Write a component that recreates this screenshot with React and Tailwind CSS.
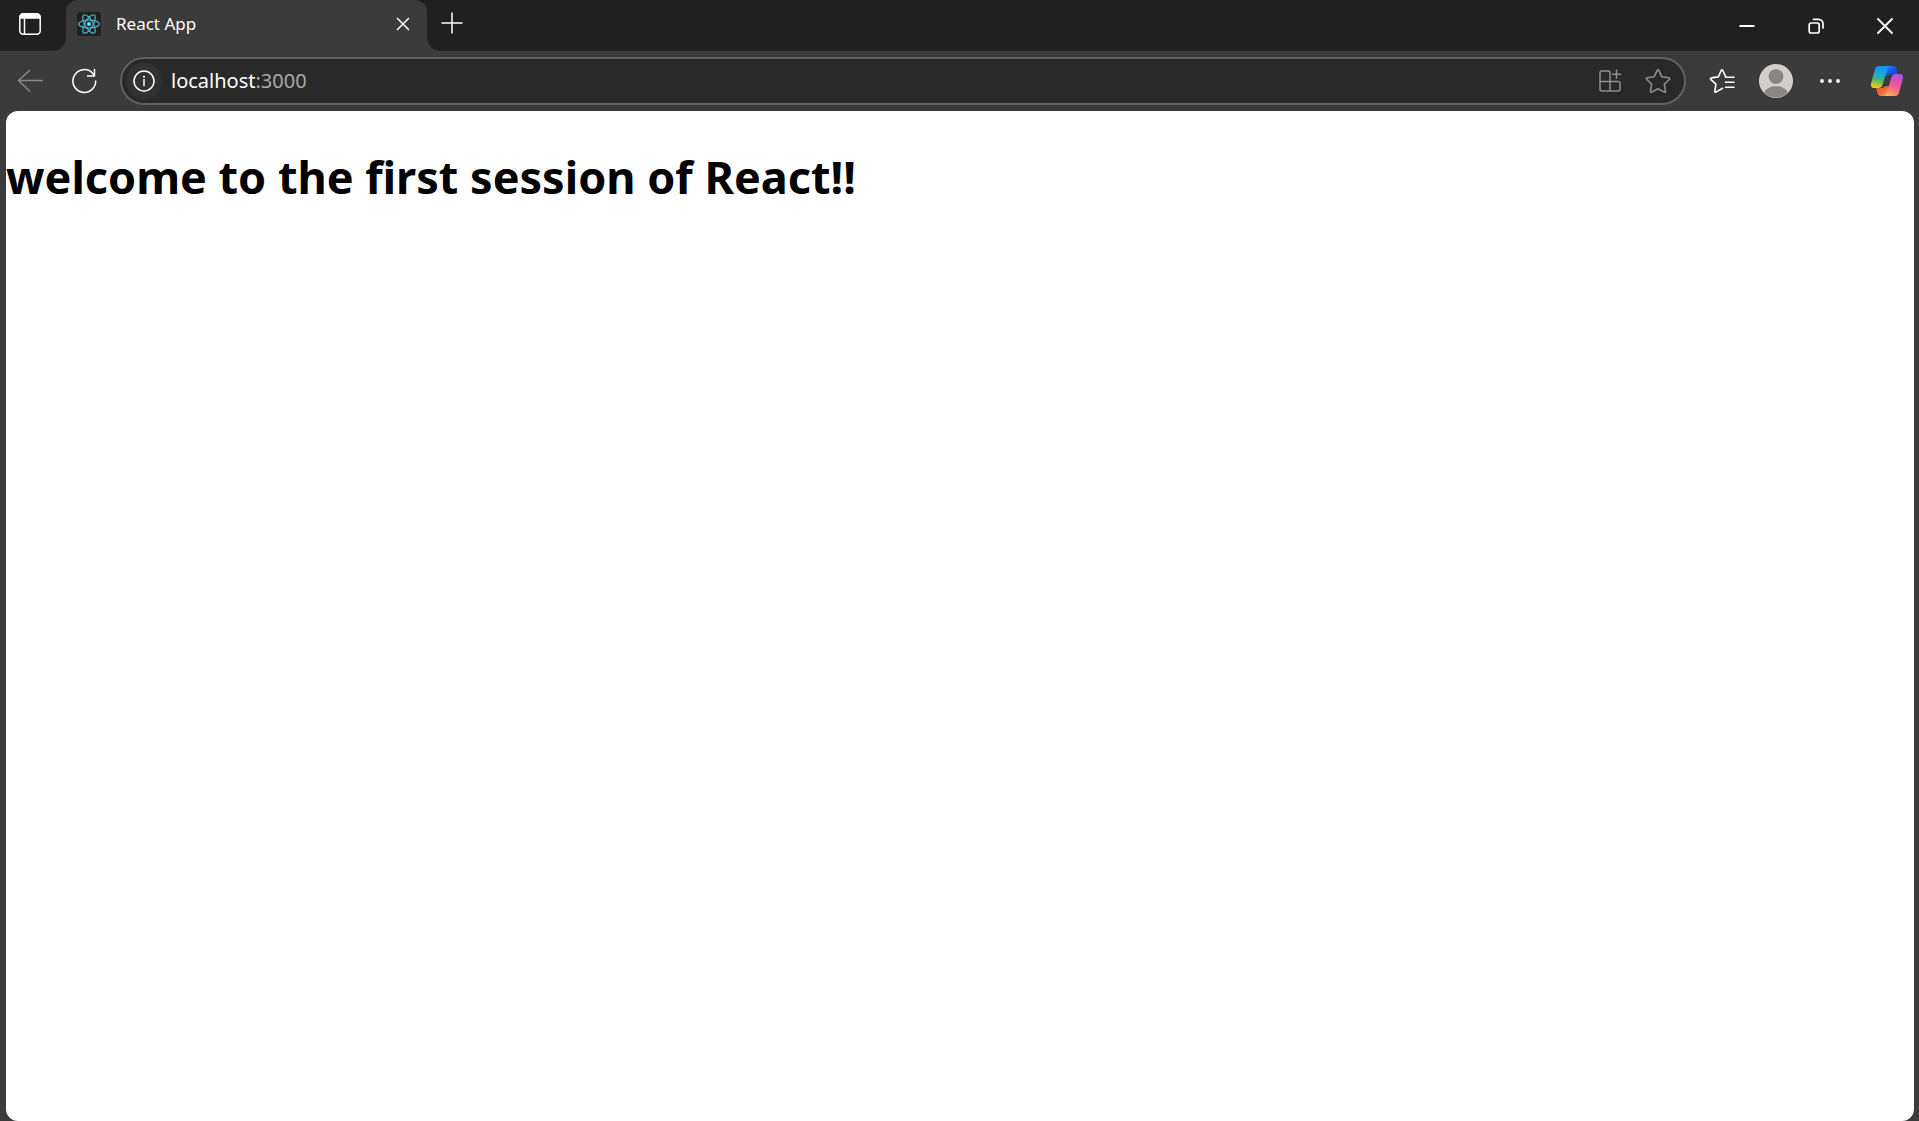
import React from "react";

const stroke = {
  fill: "none",
  stroke: "currentColor",
  strokeLinecap: "round",
  strokeLinejoin: "round",
};

const TabActionsIcon = () => (
  <svg width="24" height="24" viewBox="0 0 24 24" {...stroke} strokeWidth="1.5" aria-hidden="true">
    <rect x="1.8" y="1.8" width="20.4" height="20.4" rx="3.5" />
    <path d="M2 5.5A3.5 3.5 0 0 1 5.5 2h13A3.5 3.5 0 0 1 22 5.500V6H2z" fill="currentColor" />
    <path d="M6.500 6v16" />
  </svg>
);

const ReactIcon = () => (
  <svg width="24" height="24" viewBox="0 0 24 24" aria-hidden="true">
    <rect width="24" height="24" rx="2.500" fill="#222222" />
    <g fill="none" stroke="#53bbd6" strokeWidth="1.100">
      <ellipse cx="12" cy="12" rx="10.400" ry="4" />
      <ellipse cx="12" cy="12" rx="10.400" ry="4" transform="rotate(60 12 12)" />
      <ellipse cx="12" cy="12" rx="10.400" ry="4" transform="rotate(120 12 12)" />
    </g>
    <circle cx="12" cy="12" r="2" fill="#61dafb" />
  </svg>
);

const CloseTabIcon = () => (
  <svg width="14" height="14" viewBox="0 0 14 14" {...stroke} strokeWidth="1.500" aria-hidden="true">
    <path d="M1.500 1.500l11 11M12.500 1.500l-11 11" />
  </svg>
);

const PlusIcon = () => (
  <svg width="22" height="22" viewBox="0 0 22 22" {...stroke} strokeWidth="1.500" aria-hidden="true">
    <path d="M11 1v20M1 11h20" />
  </svg>
);

const MinimizeIcon = () => (
  <svg width="16" height="16" viewBox="0 0 16 16" {...stroke} strokeLinecap="butt" strokeWidth="2" aria-hidden="true">
    <path d="M.5 8h15" />
  </svg>
);

const RestoreIcon = () => (
  <svg width="16" height="16" viewBox="0 0 16 16" {...stroke} strokeWidth="1.700" aria-hidden="true">
    <rect x="1.200" y="5" width="10" height="10" rx="2" />
    <path d="M5.500 1.300H10.500A4.500 4.500 0 0 1 15 5.800V10" />
  </svg>
);

const CloseWindowIcon = () => (
  <svg width="16" height="16" viewBox="0 0 16 16" {...stroke} strokeWidth="1.800" aria-hidden="true">
    <path d="M1 1l14 14M15 1L1 15" />
  </svg>
);

const BackIcon = () => (
  <svg width="26" height="24" viewBox="0 0 26 24" {...stroke} strokeWidth="1.400" aria-hidden="true">
    <path d="M25 11.500H1.500M12.500 1.500l-11 10 11 10.500" />
  </svg>
);

const ReloadIcon = () => (
  <svg width="26" height="26" viewBox="0 0 26 26" {...stroke} strokeWidth="1.500" aria-hidden="true">
    <path d="M24.700 13A11.400 11.400 0 1 1 21.700 5.300L23.500 7.800M23.500 1.500V8H16.500" />
  </svg>
);

const InfoIcon = () => (
  <svg width="22" height="22" viewBox="0 0 22 22" {...stroke} strokeWidth="1.500" aria-hidden="true">
    <circle cx="11" cy="11" r="10" />
    <path d="M11 9.500v6" />
    <circle cx="11" cy="6.800" r="1" fill="currentColor" stroke="none" />
  </svg>
);

const AppsIcon = () => (
  <svg width="24" height="24" viewBox="0 0 24 24" {...stroke} strokeWidth="1.500" aria-hidden="true">
    <path d="M12 12.500V4a2 2 0 0 0-2-2H4a2 2 0 0 0-2 2v16a2 2 0 0 0 2 2h16a2 2 0 0 0 2-2v-5.500a2 2 0 0 0-2-2H2M12 12.500V22" />
    <path d="M18.500 1.200v8M14.500 5.200h8" />
  </svg>
);

const StarIcon = () => (
  <svg width="26" height="26" viewBox="0 0 26 26" {...stroke} strokeWidth="1.600" aria-hidden="true">
    <path d="M12.200 2.300Q13 1 13.800 2.300L16.900 8.800L24 9.800Q25.300 10.200 24.400 11.200L19.300 16.200L20.500 23.300Q20.500 24.700 19.300 24.100L13 20.800L6.700 24.100Q5.500 24.700 5.500 23.300L6.700 16.200L1.600 11.200Q.7 10.200 2 9.800L9.100 8.800Z" />
  </svg>
);

const FavoritesIcon = () => (
  <svg width="26" height="26" viewBox="0 0 26 26" {...stroke} strokeWidth="1.600" aria-hidden="true">
    <path d="M13.500 20.300L6.900 24.100Q5.600 24.600 5.800 23.200L6.900 16.200L1.800 11.400Q.9 10.300 2.200 9.900L9.300 8.900L12.300 2.300Q13 1.100 13.700 2.300L16.800 8.900" />
    <path d="M16.500 9.200H25M16.500 14.200H25M16.500 19.200H25" />
  </svg>
);

const AvatarIcon = () => (
  <svg width="34" height="34" viewBox="0 0 34 34" aria-hidden="true">
    <defs>
      <clipPath id="avatarClip">
        <circle cx="17" cy="17" r="16.500" />
      </clipPath>
    </defs>
    <circle cx="17" cy="17" r="17" fill="#d2d0ce" />
    <g clipPath="url(#avatarClip)" fill="#8a8684">
      <circle cx="17" cy="12.600" r="7.400" />
      <ellipse cx="17" cy="32.500" rx="12.800" ry="10.500" />
    </g>
  </svg>
);

const DotsIcon = () => (
  <svg width="22" height="6" viewBox="0 0 22 6" fill="currentColor" aria-hidden="true">
    <circle cx="3" cy="3" r="1.900" />
    <circle cx="11" cy="3" r="1.900" />
    <circle cx="19" cy="3" r="1.900" />
  </svg>
);

const CopilotIcon = () => (
  <svg width="34" height="32" viewBox="0 0 34 32" aria-hidden="true">
    <defs>
      <linearGradient id="copLeft" x1=".55" y1="0" x2=".35" y2="1">
        <stop offset="0" stopColor="#1a8ff0" />
        <stop offset=".35" stopColor="#16a5dc" />
        <stop offset=".65" stopColor="#4fb573" />
        <stop offset="1" stopColor="#f8cf0a" />
      </linearGradient>
      <linearGradient id="copTop" x1="0" y1="0" x2="1" y2="1">
        <stop offset="0" stopColor="#1b8df5" />
        <stop offset=".6" stopColor="#1551d8" />
        <stop offset="1" stopColor="#2a3fc4" />
      </linearGradient>
      <linearGradient id="copRight" x1=".75" y1="0" x2=".35" y2="1">
        <stop offset="0" stopColor="#a750ee" />
        <stop offset=".45" stopColor="#e9549b" />
        <stop offset=".75" stopColor="#fb7a76" />
        <stop offset="1" stopColor="#ffb155" />
      </linearGradient>
      <linearGradient id="copBottom" x1="0" y1="0" x2="1" y2="1">
        <stop offset="0" stopColor="#e8452f" />
        <stop offset="1" stopColor="#ff9145" />
      </linearGradient>
    </defs>
    <path d="M16 1h7c2 0 3 1 3.600 3L28 9h-4c-2.500 0-3.600.5-4.500 1.500L15 11z" fill="url(#copTop)" />
    <path d="M18 31h-7c-2 0-3-1-3.600-3L6 23h4c2.500 0 3.600-.5 4.500-1.500L19 21z" fill="url(#copBottom)" />
    <path d="M9.500 1h12c-2.500 0-3.400 1.200-4.200 3.500L12.600 19.500C11.800 22 10.600 23 8.300 23H4.500C1.500 23 .4 21 1.200 18L4.800 4.800C5.600 2 6.700 1 9.500 1z" fill="url(#copLeft)" />
    <path d="M24.500 31h-12c2.500 0 3.400-1.200 4.200-3.500L21.400 12.500C22.200 10 23.400 9 25.700 9h3.800c3 0 4.100 2 3.300 5L29.200 27.200C28.400 30 27.300 31 24.500 31z" fill="url(#copRight)" />
  </svg>
);

const WindowButton = ({ label, children }) => (
  <button type="button" aria-label={label} className="flex h-full w-[69px] items-center justify-center hover:bg-white/10">
    {children}
  </button>
);

const ToolButton = ({ label, className = "", children }) => (
  <button
    type="button"
    aria-label={label}
    className={"flex h-10 w-12 shrink-0 items-center justify-center rounded-lg hover:bg-white/10 " + className}
  >
    {children}
  </button>
);

function TitleBar() {
  return (
    <header className="flex h-[51px] shrink-0 items-stretch bg-[#202020]">
      <div className="flex w-[66px] items-center pb-1 pl-1.5">
        <ToolButton label="Tab actions">
          <TabActionsIcon />
        </ToolButton>
      </div>
      <div className="relative flex w-[361px] items-center rounded-t-xl bg-[#3b3b3b] pr-3 pb-[3px] pl-[11px] before:absolute before:bottom-0 before:-left-3 before:size-3 before:bg-[radial-gradient(circle_at_0_0,transparent_11px,#3b3b3b_12px)] after:absolute after:-right-3 after:bottom-0 after:size-3 after:bg-[radial-gradient(circle_at_100%_0,transparent_11px,#3b3b3b_12px)]">
        <ReactIcon />
        <span className="ml-[15px] flex-1 text-[17px] leading-6">React App</span>
        <button type="button" aria-label="Close tab" className="flex size-6 items-center justify-center rounded hover:bg-white/10">
          <CloseTabIcon />
        </button>
      </div>
      <div className="flex items-center pb-[5px] pl-px">
        <ToolButton label="New tab">
          <PlusIcon />
        </ToolButton>
      </div>
      <div className="ml-auto flex">
        <WindowButton label="Minimize"><MinimizeIcon /></WindowButton>
        <WindowButton label="Restore"><RestoreIcon /></WindowButton>
        <WindowButton label="Close"><CloseWindowIcon /></WindowButton>
      </div>
    </header>
  );
}

function AddressBar() {
  return (
    <div className="mx-1.5 flex h-12 flex-1 items-center rounded-full border-2 border-[#606060] bg-[#292929] pr-0.5 pl-1">
      <button type="button" aria-label="View site information" className="flex size-9 items-center justify-center rounded-full bg-[#323232]">
        <InfoIcon />
      </button>
      <a href="#" className="ml-[9px] flex-1 text-xl leading-7">
        localhost<span className="text-[#a8a8a8]">:3000</span>
      </a>
      <div className="flex text-[#8f8f8f]">
        <ToolButton label="App available"><AppsIcon /></ToolButton>
        <ToolButton label="Add this page to favorites"><StarIcon /></ToolButton>
      </div>
    </div>
  );
}

export default function App() {
  return (
    <div className="flex h-screen flex-col overflow-hidden bg-[#3b3b3b] font-['Noto_Sans',sans-serif] text-white">
      <TitleBar />
      <nav aria-label="Browser toolbar" className="flex h-[60px] shrink-0 items-center gap-1.5 pr-2 pl-1.5">
        <ToolButton label="Back" className="text-[#8a8a8a]"><BackIcon /></ToolButton>
        <ToolButton label="Refresh"><ReloadIcon /></ToolButton>
        <AddressBar />
        <ToolButton label="Favorites"><FavoritesIcon /></ToolButton>
        <ToolButton label="Profile"><AvatarIcon /></ToolButton>
        <ToolButton label="Settings and more"><DotsIcon /></ToolButton>
        <ToolButton label="Copilot" className="ml-[3px]"><CopilotIcon /></ToolButton>
      </nav>
      <main className="mr-[5px] ml-1.5 flex-1 rounded-xl bg-white pt-[34px] text-black">
        <h1 className="text-[45px] leading-[64px] font-bold">welcome to the first session of React!!</h1>
      </main>
    </div>
  );
}
